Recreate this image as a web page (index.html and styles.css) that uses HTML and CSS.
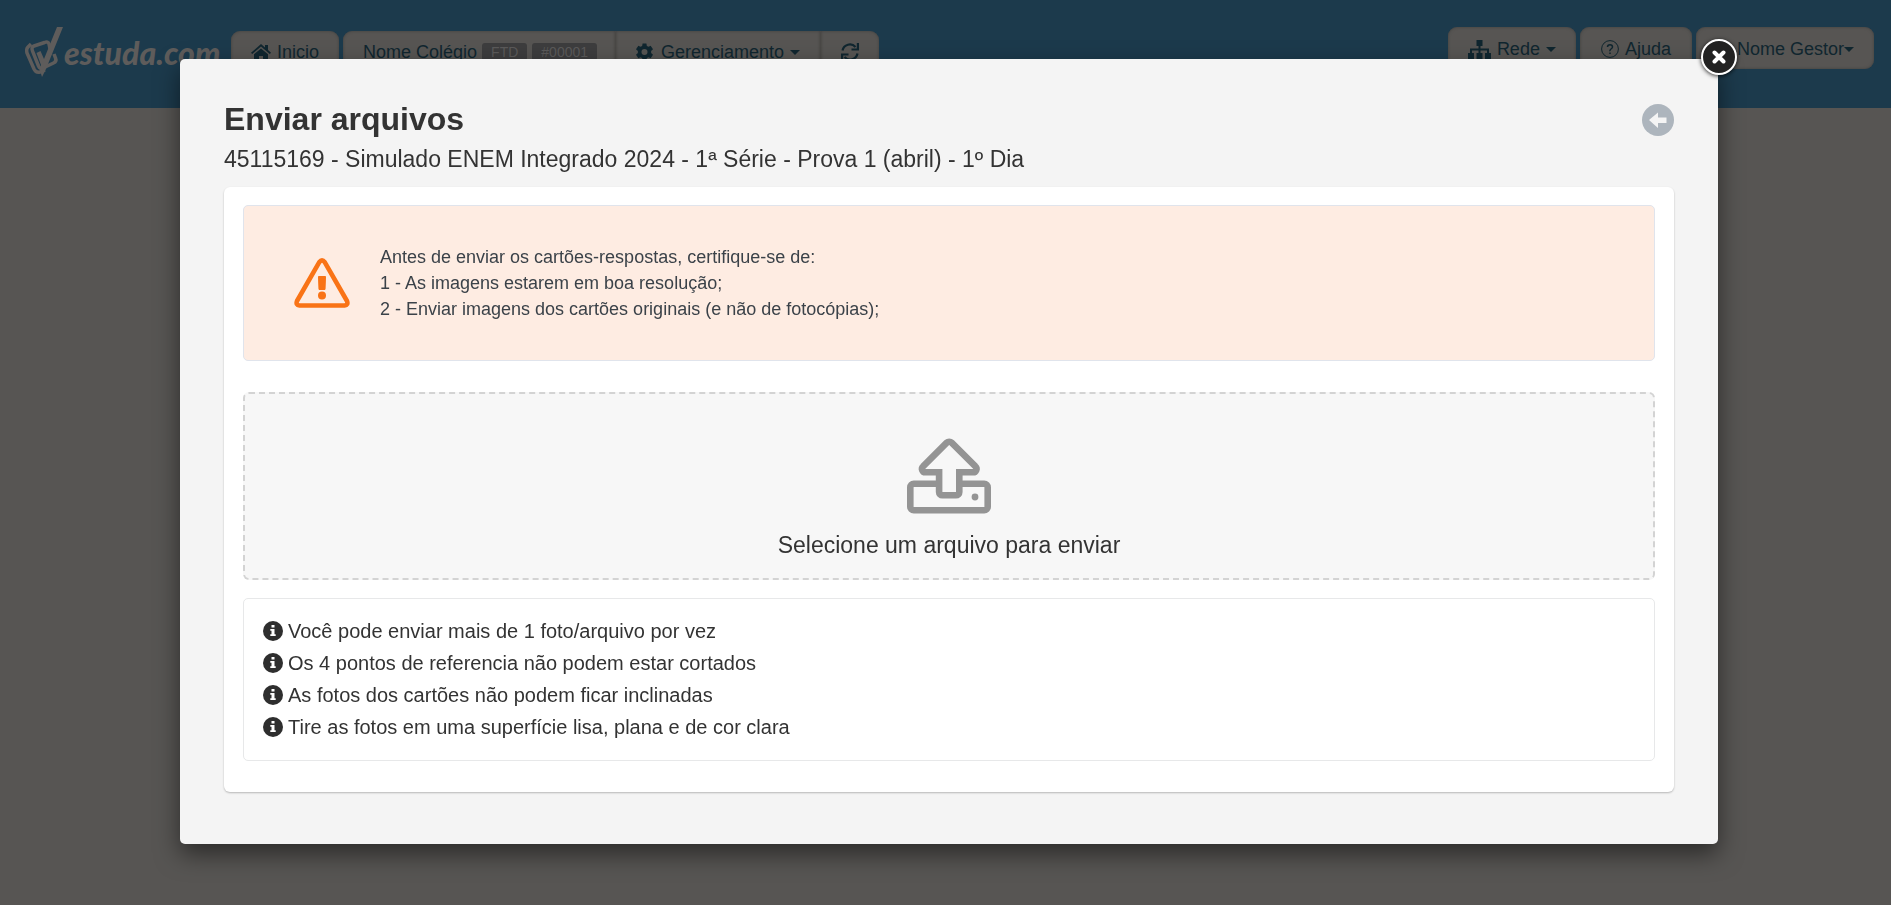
FILE: index.html
```html
<!DOCTYPE html>
<html lang="pt-BR">
<head>
    <meta charset="UTF-8">
    <meta name="viewport" content="width=device-width, initial-scale=1.0">
    <title>Enviar arquivos | estuda.com</title>
    <link rel="stylesheet" href="styles.css">
</head>
<body>
    <svg class="sprite" aria-hidden="true">
        <symbol id="icon-info" viewBox="0 0 20 20">
            <circle cx="10" cy="10" r="10"/>
            <path fill="#fff" d="M8.500 4h3v2.600h-3zM7.300 8h4.200v5.200h1.200V15H7.300v-1.800h1.200V9.800H7.300z"/>
        </symbol>
    </svg>

    <!-- ============ topo ============ -->
    <header class="topbar">
        <a href="#" class="logo">
            <svg class="logo-mark" viewBox="0 0 38 50" aria-hidden="true">
                <path d="M6 17L3 20Q1 22 2 26L9 42Q11 46 15 45L20 43" fill="none" stroke="currentColor" stroke-width="3.500"/>
                <path d="M25 22L24 17Q23 14 19.500 15.500L9 19Q6 20 7.500 24L13.500 39Q15 42.500 18 41L28.500 36Q32 34.500 30.500 31L29 27" fill="none" stroke="currentColor" stroke-width="3.500"/>
                <path d="M32 0H38L21 42L17 50L14.500 42L16 38L11.500 26L15.500 24L19 32Z" fill="currentColor"/>
            </svg>
            <span class="logo-text">estuda.com</span>
        </a>

        <nav class="nav">
            <a href="#" class="btn">
                <svg class="icon" width="20" height="17" viewBox="0 0 20 17" aria-hidden="true">
                    <path d="M10 0L14 3.500V1H17V6L20 8.800L18.800 10L10 2.600L1.200 10L0 8.800Z"/>
                    <path d="M10 4.500L17 10.300V17H12V12H8V17H3V10.300Z"/>
                </svg>
                Inicio
            </a>
            <div class="btn-group">
                <a href="#" class="btn btn-school">Nome Colégio <span class="tag">FTD</span><span class="tag">#00001</span></a>
                <button type="button" class="btn btn-manage">
                    <svg class="icon" width="17" height="18" viewBox="0 0 18 18" aria-hidden="true">
                        <path fill-rule="evenodd" d="M7 0h4l.5 2.600 1.800.9L15.500 2.500 18 6l-2 1.900v2.200L18 12l-2.500 3.500-2.200-1-1.800.9L11 18H7l-.5-2.600-1.800-.9-2.200 1L0 12l2-1.900V7.900L0 6l2.500-3.500 2.200 1 1.800-.9zM9 5.800a3.200 3.200 0 1 0 0 6.400 3.200 3.200 0 0 0 0-6.400z"/>
                    </svg>
                    Gerenciamento
                    <span class="caret"></span>
                </button>
                <button type="button" class="btn" aria-label="Atualizar">
                    <svg class="icon" width="18" height="18" viewBox="0 0 18 18" aria-hidden="true">
                        <path d="M1.500 7.500A7.500 7.500 0 0 1 14.500 4M16.500 10.500A7.500 7.500 0 0 1 3.500 14" fill="none" stroke="currentColor" stroke-width="2.200"/>
                        <path d="M18 0V7.500H10.500V5.500H15.800V0ZM0 18V10.500H7.500V12.500H2.200V18Z"/>
                    </svg>
                </button>
            </div>
        </nav>

        <div class="user-nav">
            <button type="button" class="btn">
                <svg class="icon" width="23" height="19" viewBox="0 0 23 19" aria-hidden="true">
                    <path d="M8.500 0h6v6h-2v2.500H21V13h2v6h-6v-6h2v-2.500h-6.500V13h2v6h-6v-6h2v-2.500H4V13h2v6H0v-6h2V8.500h8.500V6h-2z"/>
                </svg>
                Rede
                <span class="caret"></span>
            </button>
            <a href="#" class="btn btn-help">
                <svg class="icon" width="18" height="18" viewBox="0 0 18 18" aria-hidden="true">
                    <circle cx="9" cy="9" r="8.400" fill="none" stroke="currentColor"/>
                    <path d="M6.500 7Q6.500 4.700 9 4.700T11.500 7Q11.500 8 10 9T9 11.200M9 12.500V14" fill="none" stroke="currentColor" stroke-width="1.500"/>
                </svg>
                Ajuda
            </a>
            <button type="button" class="btn btn-user">Nome Gestor<span class="caret"></span></button>
        </div>
    </header>

    <!-- ============ modal ============ -->
    <div class="overlay">
        <div class="modal" role="dialog" aria-labelledby="modal-title">
            <button type="button" class="modal-close" aria-label="Fechar">
                <svg width="14" height="14" viewBox="0 0 14 14" aria-hidden="true">
                    <path d="M2.500 2.500L11.500 11.500M11.500 2.500L2.500 11.500" stroke="#fff" stroke-width="4" stroke-linecap="round"/>
                </svg>
            </button>

            <div class="modal-header">
                <div>
                    <h1 class="modal-title" id="modal-title">Enviar arquivos</h1>
                    <p class="modal-subtitle">45115169 - Simulado ENEM Integrado 2024 - 1ª Série - Prova 1 (abril) - 1º Dia</p>
                </div>
                <a href="#" class="back-link" aria-label="Voltar">
                    <svg width="32" height="32" viewBox="0 0 32 32" aria-hidden="true">
                        <circle cx="16" cy="16" r="16" fill="#adb5bd"/>
                        <path d="M7 16L16 8.500V13.500H24.500V19H16V24Z" fill="#f4f4f4"/>
                    </svg>
                </a>
            </div>

            <div class="panel">
                <div class="alert">
                    <svg class="alert-icon" width="56" height="50" viewBox="0 0 56 50" aria-hidden="true">
                        <path d="M25.300 4.200Q28 .5 30.700 4.200L53 43Q54.500 47 50.500 47.500H5.500Q1.500 47 3 43Z" fill="none" stroke="#f97316" stroke-width="4.600" stroke-linejoin="round"/>
                        <path d="M24.500 18.500H31.500L31 31.500H25Z" fill="#f97316" stroke="#f97316" stroke-linejoin="round"/>
                        <circle cx="28" cy="37.500" r="4" fill="#f97316"/>
                    </svg>
                    <div class="alert-text">
                        Antes de enviar os cartões-respostas, certifique-se de:<br>
                        1 - As imagens estarem em boa resolução;<br>
                        2 - Enviar imagens dos cartões originais (e não de fotocópias);
                    </div>
                </div>

                <button type="button" class="dropzone">
                    <svg width="84" height="76" viewBox="0 0 84 76" fill="none" stroke="#949494" stroke-width="6.600" aria-hidden="true">
                        <path d="M39.800 4.700a3.400 3.400 0 0 1 4.800 0L68.400 28.400a3.400 3.400 0 0 1-2.400 5.900H52.300V54a3.300 3.300 0 0 1-3.300 3.300H35.400a3.300 3.300 0 0 1-3.300-3.300V34.300H18.500a3.400 3.400 0 0 1-2.400-5.900z"/>
                        <path d="M32 45.800H6.800a3.500 3.500 0 0 0-3.500 3.500V68.700a3.500 3.500 0 0 0 3.500 3.500H77.200a3.500 3.500 0 0 0 3.500-3.500V49.300a3.500 3.500 0 0 0-3.500-3.500H52"/>
                        <circle cx="68" cy="59" r="3.400" fill="#949494" stroke="none"/>
                    </svg>
                    Selecione um arquivo para enviar
                </button>

                <ul class="tips">
                    <li><svg class="tip-icon" aria-hidden="true"><use href="#icon-info"/></svg>Você pode enviar mais de 1 foto/arquivo por vez</li>
                    <li><svg class="tip-icon" aria-hidden="true"><use href="#icon-info"/></svg>Os 4 pontos de referencia não podem estar cortados</li>
                    <li><svg class="tip-icon" aria-hidden="true"><use href="#icon-info"/></svg>As fotos dos cartões não podem ficar inclinadas</li>
                    <li><svg class="tip-icon" aria-hidden="true"><use href="#icon-info"/></svg>Tire as fotos em uma superfície lisa, plana e de cor clara</li>
                </ul>
            </div>
        </div>
    </div>
</body>
</html>
```
FILE: styles.css
```css
* { margin: 0; padding: 0; box-sizing: border-box; }
body { font-family: "Liberation Sans", Arial, sans-serif; background-color: #575553; color: #333; min-height: 100vh; }
button { font: inherit; color: inherit; cursor: pointer; }
svg { display: block; flex-shrink: 0; }
.sprite { display: none; }

/* topo */
.topbar { display: flex; align-items: flex-start; height: 108px; padding: 27px 17px 0 25px; background-color: #1c3a4c; }
.logo { display: flex; gap: 1px; width: 206px; color: #5e5c5b; text-decoration: none; }
.logo-mark { width: 38px; height: 50px; }
.logo-text { font-family: Lato, sans-serif; font-size: 32px; line-height: 52px; font-weight: 900; font-style: italic; }
.nav { display: flex; gap: 4px; padding-top: 4px; }
.user-nav { display: flex; gap: 4px; margin-left: auto; }
.btn { display: flex; align-items: center; gap: 6px; height: 42px; padding: 0 20px; border: 0; border-radius: 9px; background-color: #575553; box-shadow: inset 0 0 3px #3f3e3d; color: #10262f; font-size: 18px; text-decoration: none; white-space: nowrap; }
.icon { fill: currentColor; }
.user-nav .btn { padding-top: 2px; }
.btn-group { display: flex; }
.btn-group .btn { border-radius: 0; border-left: 1px solid #4a4846; }
.btn-group .btn:first-child { border-left: 0; border-radius: 9px 0 0 9px; }
.btn-group .btn:last-child { border-radius: 0 9px 9px 0; }
.btn-group .btn-school { gap: 5px; padding-right: 18px; }
.btn-manage .icon { margin-right: 2px; }
.tag { padding: 0 9px; border-radius: 3px; background-color: #3d3d3e; color: #5b5a5a; font-size: 14px; line-height: 18px; }
.caret { border: 5px solid transparent; border-top-color: currentColor; border-bottom: 0; }
.user-nav .btn-help { padding: 2px 21px 0; }
.btn-user { gap: 0; padding-left: 41px; }

/* modal */
.overlay { position: fixed; inset: 0; padding: 59px 173px 59px 180px; }
.modal { position: relative; padding: 37px 44px 52px; border-radius: 5px; background-color: #f4f4f4; box-shadow: 0 10px 25px rgba(0, 0, 0, 0.5); }
.modal-close { position: absolute; top: -20px; right: -19px; display: flex; align-items: center; justify-content: center; width: 36px; height: 36px; border: 2px solid #fff; border-radius: 50%; background-color: #222; box-shadow: 0 1px 4px rgba(0, 0, 0, 0.8); }
.modal-header { display: flex; justify-content: space-between; margin-bottom: 11px; }
.modal-title { font-size: 32px; line-height: 46px; }
.modal-subtitle { font-size: 23px; line-height: 34px; }
.back-link { align-self: flex-start; margin-top: 8px; }
.panel { padding: 18px 19px 31px; border-radius: 6px; background-color: #fff; box-shadow: 0 1px 2px rgba(0, 0, 0, 0.25); }

.alert { display: flex; align-items: center; gap: 30px; height: 156px; margin-bottom: 31px; padding: 0 50px 1px; border: 1px solid #e0e4ec; border-radius: 5px; background-color: #feece2; color: #3b4249; }
.alert-text { font-size: 18px; line-height: 26px; }

.dropzone { display: flex; flex-direction: column; align-items: center; gap: 15px; width: 100%; height: 188px; margin-bottom: 18px; padding-top: 44px; border: 2px dashed #d3d3d3; border-radius: 6px; background-color: #f7f7f7; font-size: 23px; line-height: 32px; }

.tips { padding: 16px 19px 17px; border: 1px solid #e7e8e9; border-radius: 5px; list-style: none; font-size: 20px; line-height: 32px; }
.tips li { display: flex; align-items: center; gap: 5px; }
.tip-icon { width: 20px; height: 20px; fill: #2e2e2e; }
```
